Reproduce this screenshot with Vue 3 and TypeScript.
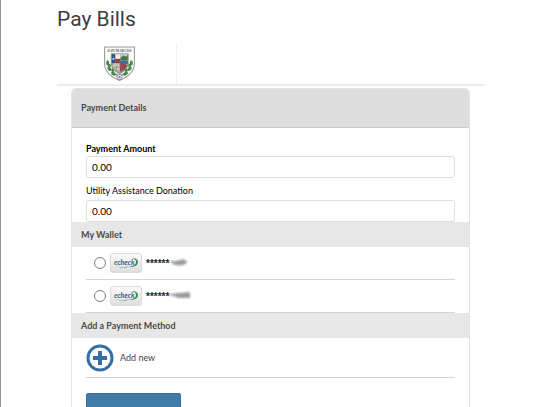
<script setup lang="ts">
import { ref } from 'vue'

interface WalletEntry {
  id: string
  mask: string
  smudge: string
}

const paymentAmount = ref('0.00')
const donation = ref('0.00')
const selected = ref('')
const wallet: WalletEntry[] = [
  { id: 'echeck-1', mask: '******', smudge: 'M0 2 C4 4 8 3 11 2 C14 1 18 2 18 4 C17 7 11 8 7 7 C3 6 2 4 0 2Z' },
  { id: 'echeck-2', mask: '******', smudge: 'M0 3 L21 1 L21 7 L9 7 L5 5 L0 4Z' },
]
</script>

<template>
  <main class="page">
    <h1 class="title">Pay Bills</h1>
    <div class="brand-bar">
      <div class="brand">
        <svg class="crest" viewBox="0 0 60 68" role="img" aria-label="San Marcos">
          <path d="M1 2 H59 V34 C59 50 47 60 30 67 C13 60 1 50 1 34Z" fill="#fbfbf9" stroke="#969898" stroke-width="2" />
          <text x="30" y="12" text-anchor="middle" class="crest-name">SAN MARCOS</text>
          <path d="M14 15 H47 V35 C46 44 39 50 30 54 C21 50 14 43 14 35Z" fill="#9ea29f" stroke="#656b6a" stroke-width="1" />
          <path d="M15 16 H22 V33 H15Z" fill="#28548f" />
          <path d="M22 16 H31 V25 H22Z" fill="#eef0f0" />
          <path d="M22 25 H31 V33 H22Z" fill="#a33b40" />
          <path d="M32 16 H46 V24 H32Z" fill="#c6d6dc" />
          <path d="M32 24 L37 18 L42 21 L46 17 V28 H32Z" fill="#467348" />
          <path d="M31 29 H46 V35 H31Z" fill="#436d9a" />
          <path d="M16 37 L22 33 L30 37 V49 L22 46Z" fill="#c9c5ba" />
          <path d="M31 36 L38 34 L45 37 L40 46 L31 50Z" fill="#9a444b" />
          <path d="M18 22 l1 2 h2 l-2 1 1 2 -2 -1 -2 1 1 -2 -1 -1 h2Z" fill="#fff" />
          <path d="M20 41 H38 M24 38 V47 M34 38 V47" stroke="#6f7776" stroke-width="1" fill="none" />
          <path d="M7 28 C7 41 14 50 27 58 M53 28 C53 41 46 50 33 58" stroke="#3c743f" stroke-width="2" fill="none" />
          <g fill="#4b874a">
            <ellipse cx="7" cy="33" rx="3" ry="5" /><ellipse cx="11" cy="38" rx="2" ry="4" />
            <ellipse cx="10" cy="44" rx="3" ry="5" transform="rotate(-30 10 44)" />
            <ellipse cx="17" cy="47" rx="2" ry="4" transform="rotate(-25 17 47)" />
            <ellipse cx="18" cy="54" rx="3" ry="5" transform="rotate(-55 18 54)" />
            <ellipse cx="53" cy="33" rx="3" ry="5" /><ellipse cx="49" cy="38" rx="2" ry="4" />
            <ellipse cx="50" cy="44" rx="3" ry="5" transform="rotate(30 50 44)" />
            <ellipse cx="43" cy="47" rx="2" ry="4" transform="rotate(25 43 47)" />
            <ellipse cx="42" cy="54" rx="3" ry="5" transform="rotate(55 42 54)" />
          </g>
          <circle cx="30" cy="60" r="5" fill="#f2f2f4" stroke="#9598b0" stroke-width="2" />
          <circle cx="30" cy="60" r="2" fill="#8a6b7c" />
        </svg>
      </div>
    </div>

    <form class="panel" @submit.prevent>
      <h2 class="panel-title">Payment Details</h2>
      <div class="fields">
        <label class="label strong" for="amount">Payment Amount</label>
        <input id="amount" v-model="paymentAmount" class="input" type="text" inputmode="decimal" />
        <label class="label spaced" for="donation">Utility Assistance Donation</label>
        <input id="donation" v-model="donation" class="input" type="text" inputmode="decimal" />
      </div>

      <h3 class="section">My Wallet</h3>
      <div class="rows">
        <label v-for="entry in wallet" :key="entry.id" class="row" :for="entry.id">
          <input :id="entry.id" v-model="selected" class="radio" type="radio" name="wallet" :value="entry.id" />
          <span class="card">
            <svg class="card-logo" viewBox="0 0 26 12" aria-hidden="true">
              <path d="M19 1 C23 1 25 3 25 5 C25 8 22 10 16 10 C21 9 23 7 23 5 C23 3 22 2 19 1Z" fill="#3f8a50" />
              <path d="M3 9 C9 11 13 10 17 9 C13 11 8 11 3 9Z" fill="#3f8a50" />
              <text x="1" y="8" class="card-name">e<tspan class="card-check">check</tspan></text>
            </svg>
          </span>
          <span class="mask">{{ entry.mask }}</span>
          <svg class="smudge" viewBox="0 0 24 10" aria-hidden="true"><path :d="entry.smudge" fill="#999" /></svg>
        </label>
      </div>

      <h3 class="section">Add a Payment Method</h3>
      <div class="rows">
        <button class="add" type="button">
          <svg class="plus" viewBox="0 0 28 28" aria-hidden="true">
            <circle cx="14" cy="14" r="12" fill="#fff" stroke="#366fa5" stroke-width="3" />
            <path d="M14 7 V21 M7 14 H21" stroke="#366fa5" stroke-width="4" />
          </svg>
          <span>Add new</span>
        </button>
      </div>
      <div class="actions">
        <button class="submit" type="submit" aria-label="Continue"></button>
      </div>
    </form>
  </main>
</template>

<style>
body {
  background: #fff;
}
</style>

<style scoped>
* {
  box-sizing: border-box;
}

.page {
  height: 100vh;
  overflow: hidden;
  padding: 5px 56px 0;
  border-left: 1px solid #929292;
  font-family: Lato, "Liberation Sans", sans-serif;
  font-size: 9px;
  color: #444;
}

.title {
  margin: 0;
  font: 400 21px/28px Roboto, sans-serif;
  color: #3d3d3d;
}

.brand-bar {
  margin-top: 10px;
  border-bottom: 2px solid #ececec;
}

.brand {
  width: 120px;
  height: 41px;
  padding: 3px 0 0 47px;
  border-right: 1px solid #f0f0f0;
}

.crest {
  display: block;
  width: 31px;
  height: 35px;
}

.crest-name {
  font: 700 7px "Liberation Serif", serif;
  fill: #555;
}

.panel {
  margin: 2px 14px 0;
  border: 1px solid #e3e3e3;
  border-radius: 5px 5px 0 0;
  overflow: hidden;
}

.panel-title {
  margin: 0;
  padding: 0 9px;
  border-bottom: 1px solid #ccc;
  background: #ddd;
  color: #454854;
  font-size: 9px;
  font-weight: 700;
  line-height: 38px;
}

.fields {
  display: flex;
  flex-direction: column;
  padding: 14px 14px 0;
}

.label {
  color: #000;
  line-height: 14px;
}

.strong {
  font-weight: 700;
}

.spaced {
  margin-top: 6px;
}

.input {
  width: 100%;
  height: 22px;
  margin: 0;
  padding: 0 5px;
  border: 1px solid #ddd;
  border-radius: 3px;
  background: #fff;
  color: #000;
  font: 400 10px Lato, sans-serif;
}

.label.spaced + .input {
  margin-top: 2px;
}

.section {
  margin: 0;
  padding: 0 9px;
  background: #e7e7e7;
  color: #4b4b4b;
  font-size: 9px;
  font-weight: 700;
  line-height: 25px;
}

.rows {
  padding: 0 14px;
}

.row {
  display: flex;
  align-items: center;
  height: 33px;
  border-bottom: 1px solid #d3d3d3;
}

.radio {
  appearance: none;
  width: 12px;
  height: 12px;
  margin: 0 4px 0 8px;
  border: 1px solid #7d7d7d;
  border-radius: 50%;
  background: #fff;
}

.radio:checked {
  background: radial-gradient(#366fa5 0 3px, #fff 4px);
}

.card {
  display: flex;
  align-items: center;
  justify-content: center;
  width: 32px;
  height: 20px;
  border: 1px solid #dadada;
  border-radius: 3px;
  background: linear-gradient(#fbfbfb, #dedede);
}

.card-logo {
  width: 26px;
  height: 12px;
}

.card-name {
  font: italic 700 7px Lato, sans-serif;
  fill: #3f8a50;
}

.card-check {
  fill: #3c628c;
}

.mask {
  margin-left: 4px;
  color: #222;
  font: 700 10px "Liberation Sans", sans-serif;
}

.smudge {
  width: 24px;
  height: 10px;
  overflow: visible;
  filter: blur(1px);
}

.add {
  display: flex;
  align-items: center;
  gap: 6px;
  width: 100%;
  height: 40px;
  padding: 0;
  border: 0;
  border-bottom: 1px solid #d3d3d3;
  background: none;
  color: #444;
  font: inherit;
  text-align: left;
}

.plus {
  width: 28px;
  height: 28px;
}

.actions {
  padding: 15px 14px;
}

.submit {
  display: block;
  width: 95px;
  height: 28px;
  border: 1px solid #356f9b;
  border-radius: 2px;
  background: #407ba7;
}
</style>
